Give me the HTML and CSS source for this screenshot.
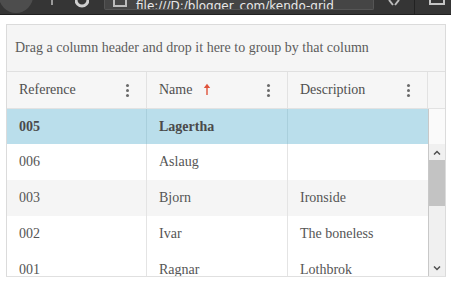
FILE: index.html
```html
<html>
  <head>
    <title>Kendo Grid</title>
    <link rel="stylesheet" href="styles.css">
  </head>
  <body>
    <div class="chrome">
      <div class="nav">
        <span class="back"></span>
        <svg class="fwd" width="12" height="10" viewBox="0 0 12 10"><path d="M6 0 L6 5" stroke="#9a9a9a" stroke-width="2"/></svg>
        <svg class="reload" width="14" height="10" viewBox="0 0 14 10"><path d="M1 0 A6 6 0 0 0 13 0" stroke="#cfcfcf" stroke-width="3" fill="none"/></svg>
      </div>
      <div class="address">
        <span class="page-icon"></span>
        <span class="url">file:///D:/blogger_com/kendo-grid</span>
      </div>
      <div class="tools">
        <svg width="14" height="10" viewBox="0 0 14 10"><path d="M2 0 L6 5 M12 0 L8 5" stroke="#bdbdbd" stroke-width="2"/></svg>
        <span class="sep"></span>
        <svg width="16" height="10" viewBox="0 0 16 10"><rect x="1" y="-4" width="14" height="8" stroke="#c4c4c4" stroke-width="2" fill="none"/></svg>
      </div>
    </div>

    <div class="page">
      <div class="grid">
        <div class="group-area">Drag a column header and drop it here to group by that column</div>

        <div class="grid-header">
          <div class="th"><span>Reference</span><span class="menu"></span></div>
          <div class="th"><span>Name <svg class="sort" width="8" height="12" viewBox="0 0 8 12"><path d="M4 2 L4 12" stroke="#e0533b" stroke-width="1.4"/><path d="M0.8 5 L4 0.8 L7.2 5 Z" fill="#e0533b"/></svg></span><span class="menu"></span></div>
          <div class="th"><span>Description</span><span class="menu"></span></div>
          <div class="th-scroll"></div>
        </div>

        <div class="grid-body">
          <div class="rows">
            <div class="tr selected"><div class="td">005</div><div class="td">Lagertha</div><div class="td"></div></div>
            <div class="tr"><div class="td">006</div><div class="td">Aslaug</div><div class="td"></div></div>
            <div class="tr alt"><div class="td">003</div><div class="td">Bjorn</div><div class="td">Ironside</div></div>
            <div class="tr"><div class="td">002</div><div class="td">Ivar</div><div class="td">The boneless</div></div>
            <div class="tr"><div class="td">001</div><div class="td">Ragnar</div><div class="td">Lothbrok</div></div>
          </div>
          <div class="vscroll-col">
            <div class="vscroll">
              <div class="arrow">
                <svg width="8" height="5" viewBox="0 0 8 5"><path d="M1 4.5 L4 1.5 L7 4.5" stroke="#505050" stroke-width="1.5" fill="none"/></svg>
              </div>
              <div class="track"><div class="thumb"></div></div>
              <div class="arrow">
                <svg width="8" height="5" viewBox="0 0 8 5"><path d="M1 0.5 L4 3.5 L7 0.5" stroke="#505050" stroke-width="1.5" fill="none"/></svg>
              </div>
            </div>
          </div>
        </div>
      </div>
    </div>
  </body>
</html>
```

FILE: styles.css
```css
/* page */
body {
  margin: 0;
  background-color: #fff;
  font-family: "Liberation Serif", "Times New Roman", serif;
  font-size: 14px;
  color: #555;
}

/* browser chrome strip at the top */
.chrome {
  height: 14px;
  display: flex;
  align-items: flex-start;
  background-color: #353535;
  border-bottom: 1px solid #202020;
  overflow: hidden;
}
.nav {
  width: 104px;
  display: flex;
  align-items: flex-start;
}
.back {
  width: 34px;
  height: 34px;
  margin-top: -21px;
  margin-left: -1px;
  border-radius: 50%;
  background-color: #4d4d4d;
}
.fwd {
  margin-left: 13px;
}
.reload {
  margin-left: 17px;
}
.address {
  width: 268px;
  height: 9px;
  display: flex;
  align-items: flex-end;
  background-color: #454545;
  border: 1px solid #555;
  border-top: none;
  border-radius: 0 0 2px 2px;
  overflow: hidden;
}
.page-icon {
  width: 10px;
  height: 6px;
  margin-left: 8px;
  margin-bottom: 2px;
  border: 2px solid #bbb;
  border-top: none;
}
.url {
  margin-left: 9px;
  margin-bottom: -3px;
  font-family: "DejaVu Sans", sans-serif;
  font-size: 12px;
  line-height: 12px;
  color: #e8e8e8;
  white-space: nowrap;
}
.tools {
  flex: 1;
  display: flex;
  align-items: flex-start;
  padding-left: 13px;
}
.sep {
  width: 1px;
  height: 14px;
  margin: 0 14px 0 13px;
  background-color: #222;
}

/* grid */
.page {
  padding: 9px 5px 0 6px;
}
.grid {
  border: 1px solid #dbdbdb;
  border-bottom-color: #e0e0e0;
}
.group-area {
  height: 46px;
  line-height: 46px;
  padding-left: 8px;
  background-color: #f5f5f5;
  border-bottom: 1px solid #e0e0e0;
  color: #5c5c5c;
}
.grid-header {
  display: grid;
  grid-template-columns: 140px 141px 140px 1fr;
  height: 36px;
  background-color: #f6f6f6;
  border-bottom: 1px solid #e2e2e2;
}
.th {
  display: flex;
  align-items: center;
  justify-content: space-between;
  padding: 0 17px 0 12px;
  border-right: 1px solid #e2e2e2;
  color: #4f4f4f;
}
.sort {
  margin-left: 7px;
  vertical-align: -1px;
}
.menu {
  width: 3px;
  height: 3px;
  border-radius: 50%;
  background-color: #6a6a6a;
  box-shadow: 0 -5px 0 #6a6a6a, 0 5px 0 #6a6a6a;
}
.th-scroll {
  background-color: #f6f6f6;
}

.grid-body {
  display: flex;
  height: 167px;
  overflow: hidden;
}
.rows {
  width: 421px;
  border-right: 1px solid #c8c8c8;
}
.tr {
  display: grid;
  grid-template-columns: 140px 141px 1fr;
  height: 36px;
  background-color: #fff;
}
.tr.alt {
  background-color: #f5f5f5;
}
.tr.selected {
  height: 35px;
  background-color: #badeeb;
  font-weight: bold;
  color: #4a4a4a;
}
.td {
  display: flex;
  align-items: center;
  padding-left: 12px;
  border-right: 1px solid #e4e4e4;
}
.tr .td:last-child {
  border-right: none;
}
.tr.selected .td {
  border-right-color: #a9cfdc;
}

/* vertical scrollbar */
.vscroll-col {
  flex: 1;
  padding-top: 35px;
  background-color: #fafafa;
}
.vscroll {
  height: 132px;
  display: flex;
  flex-direction: column;
  background-color: #f0f0f0;
}
.arrow {
  height: 16px;
  display: flex;
  align-items: center;
  justify-content: center;
}
.track {
  flex: 1;
}
.thumb {
  height: 46px;
  background-color: #c3c3c3;
}
```
